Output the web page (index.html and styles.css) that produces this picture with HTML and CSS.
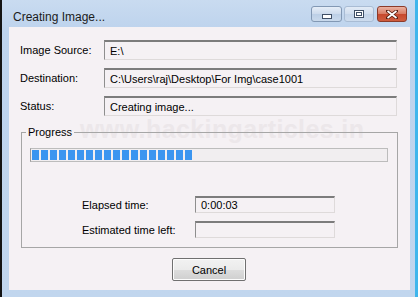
FILE: index.html
```html
<!DOCTYPE html>
<html lang="en">
<head>
    <meta charset="UTF-8">
    <title>Creating Image...</title>
    <link rel="stylesheet" href="styles.css">
</head>
<body>
    <div class="window">
        <div class="titlebar">
            <span class="title">Creating Image...</span>
            <div class="caption-buttons">
                <button class="cap-btn min" type="button">
                    <svg width="10" height="5" viewBox="0 0 10 5"><rect x="0.5" y="0.5" width="9" height="4" fill="#fff" stroke="#3f4f66"/></svg>
                </button>
                <button class="cap-btn max" type="button">
                    <svg width="10" height="8" viewBox="0 0 10 8"><rect x="0.5" y="0.5" width="9" height="7" fill="#fff" stroke="#3f4f66"/><rect x="2.5" y="2.5" width="5" height="3" fill="none" stroke="#3f4f66"/></svg>
                </button>
                <button class="cap-btn close" type="button">
                    <svg width="12" height="9" viewBox="0 0 12 9"><path d="M1.5 1 L10.5 8 M10.5 1 L1.5 8" stroke="#5a1f12" stroke-width="3.4" stroke-linecap="square"/><path d="M1.5 1 L10.5 8 M10.5 1 L1.5 8" stroke="#fff" stroke-width="1.7"/></svg>
                </button>
            </div>
        </div>
        <div class="content">
            <div class="watermark">www.hackingarticles.in</div>
            <div class="rows">
                <div class="row"><label>Image Source:</label><div class="field">E:\</div></div>
                <div class="row"><label>Destination:</label><div class="field">C:\Users\raj\Desktop\For Img\case1001</div></div>
                <div class="row"><label>Status:</label><div class="field">Creating image...</div></div>
            </div>
            <fieldset class="group">
                <legend>Progress</legend>
                <div class="progress-bar">
                    <div class="progress-fill" style="width: 160px"></div>
                </div>
                <div class="time-row"><label>Elapsed time:</label><div class="field small">0:00:03</div></div>
                <div class="time-row"><label>Estimated time left:</label><div class="field small"></div></div>
            </fieldset>
            <div class="actions">
                <button class="cancel" type="button">Cancel</button>
            </div>
        </div>
    </div>
</body>
</html>
```

FILE: styles.css
```css
body {
    margin: 0;
    background-color: #141414; /* dark desktop strip on the left */
    font-family: 'Liberation Sans', Arial, sans-serif;
    font-size: 11px;
    color: #000;
}
.window {
    box-sizing: border-box;
    width: 416px;
    height: 297px;
    margin-left: 2px;
    display: flex;
    flex-direction: column;
    padding: 0 5px 7px 7px;
    background: linear-gradient(#c9dbf0, #bdd3ed 30px, #c1d6ee);
    border-right: 3px solid #3fb6ec;
}
.titlebar {
    height: 27px;
    display: flex;
    align-items: flex-start;
}
.title {
    margin: 10px 0 0 4px;
    font-size: 12px;
    line-height: 15px;
    color: #1b1b1b;
}
.caption-buttons {
    margin: 6px 3px 0 auto;
    display: flex;
}
.cap-btn {
    box-sizing: border-box;
    height: 16px;
    padding: 0;
    display: flex;
    align-items: center;
    justify-content: center;
    border-radius: 3px;
}
.cap-btn.min {
    width: 31px;
    border: 1px solid #8298b4;
    background: linear-gradient(#e6eef8, #ccdaec 50%, #bccfe6 51%, #c9d9ec);
    align-items: flex-end;
    padding-bottom: 2px;
}
.cap-btn.max {
    width: 30px;
    margin-left: 2px;
    border: 1px solid #a9bcd4;
    background: linear-gradient(#e2ebf6, #d0ddee 50%, #c3d4e9 51%, #cddcee);
}
.cap-btn.close {
    width: 30px;
    margin-left: 3px;
    border: 1px solid #8c3b2a;
    background: linear-gradient(#eab2a2, #d87a62 50%, #c7482d 51%, #cf5d3f);
}
.content {
    flex: 1;
    position: relative;
    background-color: #f5f1f4;
    padding: 13px 12px 0 11px;
}
.watermark {
    position: absolute;
    left: 71px;
    top: 90px;
    font-size: 25px;
    line-height: 24px;
    font-weight: bold;
    letter-spacing: 0.4px;
    color: #ece7ea;
}
.rows {
    position: relative;
    display: flex;
    flex-direction: column;
    gap: 8px;
    margin-right: 1px;
}
.row {
    display: flex;
    align-items: center;
    height: 20px;
}
.row label {
    width: 84px;
}
.field {
    box-sizing: border-box;
    flex: 1;
    height: 20px;
    padding: 2px 0 0 5px;
    line-height: 15px;
    border-top: 2px solid #7c7c7c;
    border-left: 1px solid #8e8e8e;
    border-right: 1px solid #dedada;
    border-bottom: 1px solid #dedada;
    background-color: #f5f1f4;
    white-space: nowrap;
}
.group {
    position: relative;
    margin: 10px 0 0 1px;
    padding: 0 9px 9px 8px;
    border: 1px solid #a6a6a6;
}
.group legend {
    margin-left: -4px;
    padding: 0 2px;
    line-height: 13px;
}
.progress-bar {
    height: 14px;
    box-sizing: border-box;
    margin-top: 9px;
    padding: 1px;
    border: 1px solid #bcbcbc;
    border-left-color: #9c9c9c;
    background-color: #f1eef0;
}
.progress-fill {
    height: 10px;
    background: repeating-linear-gradient(90deg, #3a95f0 0, #3a95f0 7px, transparent 7px, transparent 9px);
}
.time-row {
    display: flex;
    align-items: center;
    margin-left: 52px;
    margin-top: 8px;
}
.progress-bar + .time-row {
    margin-top: 34px;
}
.time-row label {
    width: 113px;
}
.field.small {
    flex: none;
    width: 140px;
    height: 17px;
    padding-top: 0;
}
.actions {
    display: flex;
    justify-content: center;
    margin-top: 10px;
}
.cancel {
    width: 74px;
    height: 23px;
    font-family: inherit;
    font-size: 11px;
    color: #000;
    border: 1px solid #707070;
    border-radius: 2px;
    background: linear-gradient(#f2f2f2, #ebebeb 50%, #dddddd 51%, #cfcfcf);
    box-shadow: inset 0 0 0 1px #fcfcfc;
}
```
